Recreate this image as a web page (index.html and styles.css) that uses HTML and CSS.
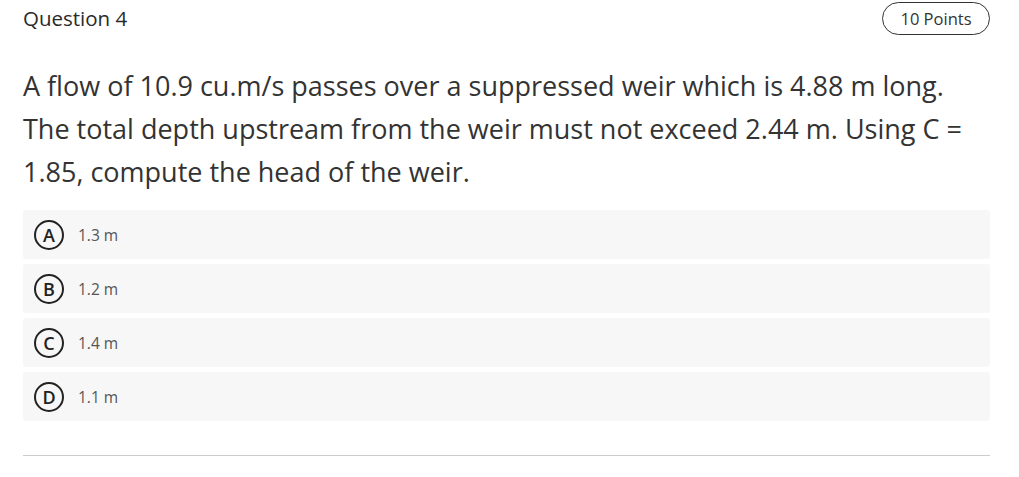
FILE: index.html
```html
<!DOCTYPE html>
<html>
<head>
<meta charset="utf-8">
<link rel="stylesheet" href="styles.css">
</head>
<body>
<div class="question">
  <div class="header">
    <div class="title">Question 4</div>
    <div class="points">10 Points</div>
  </div>
  <div class="prompt">A flow of 10.9 cu.m/s passes over a suppressed weir which is 4.88 m long. The total depth upstream from the weir must not exceed 2.44 m. Using C = 1.85, compute the head of the weir.</div>
  <div class="options">
    <div class="option"><span class="letter">A</span><span class="text">1.3 m</span></div>
    <div class="option"><span class="letter">B</span><span class="text">1.2 m</span></div>
    <div class="option"><span class="letter">C</span><span class="text">1.4 m</span></div>
    <div class="option"><span class="letter">D</span><span class="text">1.1 m</span></div>
  </div>
  <div class="divider"></div>
</div>
</body>
</html>
```
FILE: styles.css
```css
html, body {
  margin: 0;
  padding: 0;
  background: #ffffff;
}
body {
  font-family: "Open Sans", "Noto Sans", sans-serif;
  color: #333333;
}
.question {
  padding: 1px 29px 0 23px;
}
.header {
  display: flex;
  justify-content: space-between;
  align-items: center;
  height: 34px;
}
.title {
  font-size: 20.5px;
  font-weight: 500;
  color: #2a2a2a;
}
.points {
  box-sizing: border-box;
  width: 108px;
  height: 33px;
  border: 1px solid #333;
  border-radius: 17px;
  font-size: 16.5px;
  display: flex;
  align-items: center;
  justify-content: center;
  color: #333;
}
.prompt {
  margin-top: 29px;
  font-size: 27px;
  line-height: 43px;
  color: #333;
  padding-right: 20px;
}
.options {
  margin-top: 17px;
  display: flex;
  flex-direction: column;
  gap: 5px;
}
.option {
  height: 49px;
  background: #f7f7f7;
  border-radius: 3px;
  display: flex;
  align-items: center;
  padding-left: 11px;
}
.letter {
  box-sizing: border-box;
  width: 30px;
  height: 30px;
  border: 2px solid #222;
  border-radius: 50%;
  font-size: 18px;
  font-weight: 600;
  display: flex;
  align-items: center;
  justify-content: center;
  color: #222;
}
.text {
  margin-left: 14px;
  font-size: 15.5px;
  color: #555;
}
.divider {
  margin-top: 34px;
  height: 1px;
  background: #cccccc;
}
```
